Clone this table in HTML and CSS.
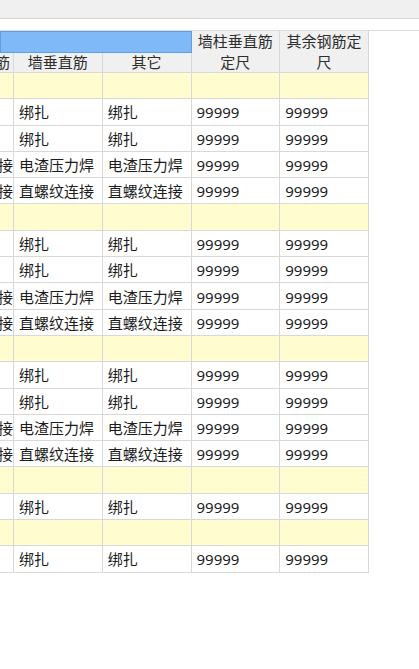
FILE: index.html
```html
<!DOCTYPE html>
<html lang="zh-CN">
<head>
<meta charset="utf-8">
<title>钢筋定尺</title>
<link rel="stylesheet" href="styles.css">
</head>
<body>
<div class="topbar"></div>
<div class="spacer"></div>
<div class="grid">
  <div class="h blue"></div>
  <div class="h two">墙柱垂直筋<br>定尺</div>
  <div class="h two">其余钢筋定<br>尺</div>
  <div class="h c0">筋</div>
  <div class="h">墙垂直筋</div>
  <div class="h">其它</div>

  <div class="y"></div><div class="y"></div><div class="y"></div><div class="y"></div><div class="y"></div>
  <div class="d c0"></div><div class="d">绑扎</div><div class="d">绑扎</div><div class="d">99999</div><div class="d">99999</div>
  <div class="d c0"></div><div class="d">绑扎</div><div class="d">绑扎</div><div class="d">99999</div><div class="d">99999</div>
  <div class="d c0">接</div><div class="d">电渣压力焊</div><div class="d">电渣压力焊</div><div class="d">99999</div><div class="d">99999</div>
  <div class="d c0">接</div><div class="d">直螺纹连接</div><div class="d">直螺纹连接</div><div class="d">99999</div><div class="d">99999</div>

  <div class="y"></div><div class="y"></div><div class="y"></div><div class="y"></div><div class="y"></div>
  <div class="d c0"></div><div class="d">绑扎</div><div class="d">绑扎</div><div class="d">99999</div><div class="d">99999</div>
  <div class="d c0"></div><div class="d">绑扎</div><div class="d">绑扎</div><div class="d">99999</div><div class="d">99999</div>
  <div class="d c0">接</div><div class="d">电渣压力焊</div><div class="d">电渣压力焊</div><div class="d">99999</div><div class="d">99999</div>
  <div class="d c0">接</div><div class="d">直螺纹连接</div><div class="d">直螺纹连接</div><div class="d">99999</div><div class="d">99999</div>

  <div class="y"></div><div class="y"></div><div class="y"></div><div class="y"></div><div class="y"></div>
  <div class="d c0"></div><div class="d">绑扎</div><div class="d">绑扎</div><div class="d">99999</div><div class="d">99999</div>
  <div class="d c0"></div><div class="d">绑扎</div><div class="d">绑扎</div><div class="d">99999</div><div class="d">99999</div>
  <div class="d c0">接</div><div class="d">电渣压力焊</div><div class="d">电渣压力焊</div><div class="d">99999</div><div class="d">99999</div>
  <div class="d c0">接</div><div class="d">直螺纹连接</div><div class="d">直螺纹连接</div><div class="d">99999</div><div class="d">99999</div>

  <div class="y"></div><div class="y"></div><div class="y"></div><div class="y"></div><div class="y"></div>
  <div class="d c0"></div><div class="d">绑扎</div><div class="d">绑扎</div><div class="d">99999</div><div class="d">99999</div>

  <div class="y"></div><div class="y"></div><div class="y"></div><div class="y"></div><div class="y"></div>
  <div class="d c0"></div><div class="d">绑扎</div><div class="d">绑扎</div><div class="d">99999</div><div class="d">99999</div>
</div>
</body>
</html>
```
FILE: styles.css
```css
html, body {
  margin: 0;
  padding: 0;
  background: #ffffff;
}
body {
  font-family: "Noto Sans", "Noto Sans CJK SC", sans-serif;
  font-size: 15px;
  color: #1c1c1c;
}
.topbar {
  height: 18px;
  background: #f0f0f0;
  border-bottom: 1px solid #d6d6d6;
}
.spacer {
  height: 11px;
  border-bottom: 1px solid #dcdcdc;
}
.grid {
  display: grid;
  grid-template-columns: 14px repeat(4, 88.75px);
  grid-template-rows: 21.5px 20.5px repeat(19, 26.3px);
  width: max-content;
}
.grid > div {
  box-sizing: border-box;
  border-right: 1px solid #d8d8d8;
  border-bottom: 1px solid #d8d8d8;
  display: flex;
  align-items: center;
  white-space: nowrap;
  overflow: hidden;
  line-height: 1;
}
.h {
  background: #f0f0f0;
  color: #2e2e2e;
  justify-content: center;
  text-align: center;
  padding-top: 1px;
}
.blue {
  grid-column: span 3;
  background: #7fb9f7;
  border: 1px solid #5f9fe8 !important;
}
.two {
  grid-row: span 2;
  line-height: 21px !important;
  padding-top: 1px;
}
.grid > .c0 {
  justify-content: flex-end;
  padding-left: 0;
}
.h.c0 {
  padding-right: 3px;
}
.d {
  background: #ffffff;
  padding-left: 5px;
  padding-top: 2px;
}
.y {
  background: #fffdd0;
}
```
